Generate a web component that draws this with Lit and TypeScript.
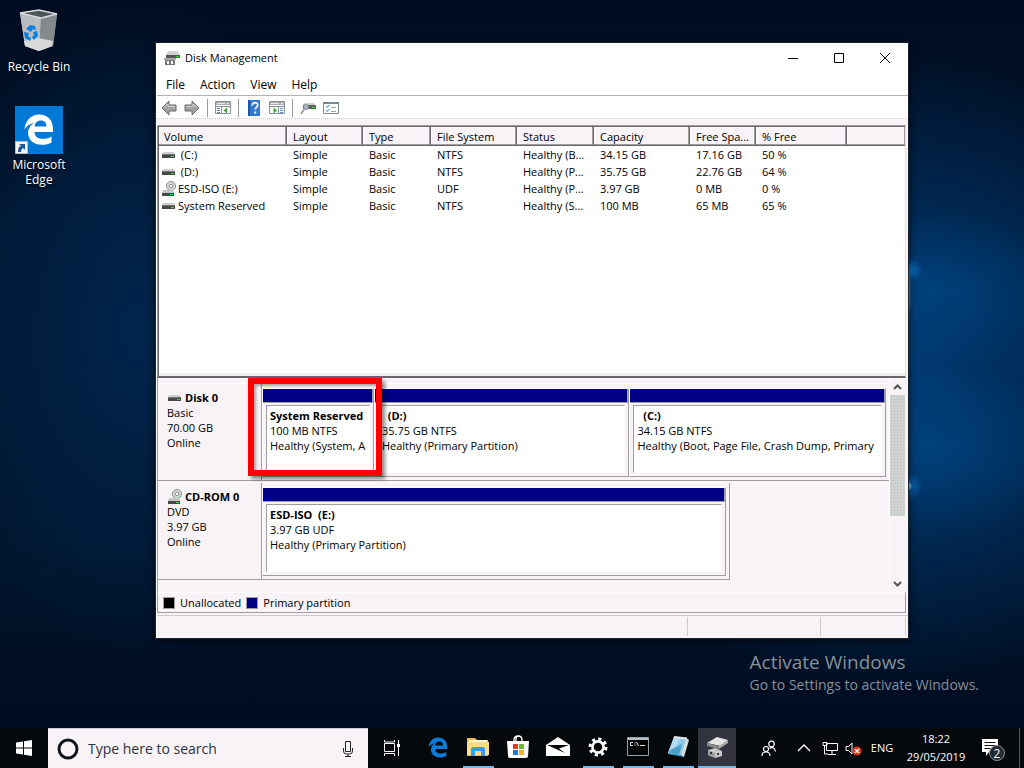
import { LitElement, html, css, svg } from "lit";
import { customElement } from "lit/decorators.js";

interface Volume {
  name: string;
  optical?: boolean;
  cells: string[];
}
interface Partition {
  title: string;
  size: string;
  status: string;
  share: number;
  marked?: boolean;
}
interface Disk {
  name: string;
  kind: string;
  size: string;
  state: string;
  optical?: boolean;
  width: number;
  partitions: Partition[];
}

const COLUMNS = ["Volume", "Layout", "Type", "File System", "Status", "Capacity", "Free Spa...", "% Free", ""];
const WIDTHS = [128, 76, 68, 86, 77, 96, 66, 91];

const VOLUMES: Volume[] = [
  { name: "\u00a0(C:)", cells: ["Simple", "Basic", "NTFS", "Healthy (B...", "34.15 GB", "17.16 GB", "50 %", ""] },
  { name: "\u00a0(D:)", cells: ["Simple", "Basic", "NTFS", "Healthy (P...", "35.75 GB", "22.76 GB", "64 %", ""] },
  { name: "ESD-ISO (E:)", optical: true, cells: ["Simple", "Basic", "UDF", "Healthy (P...", "3.97 GB", "0 MB", "0 %", ""] },
  { name: "System Reserved", cells: ["Simple", "Basic", "NTFS", "Healthy (S...", "100 MB", "65 MB", "65 %", ""] },
];

const DISKS: Disk[] = [
  {
    name: "Disk 0", kind: "Basic", size: "70.00 GB", state: "Online", width: 100,
    partitions: [
      { title: "System Reserved", size: "100 MB NTFS", status: "Healthy (System, A", share: 111, marked: true },
      { title: "\u00a0\u00a0(D:)", size: "35.75 GB NTFS", status: "Healthy (Primary Partition)", share: 256 },
      { title: "\u00a0\u00a0(C:)", size: "34.15 GB NTFS", status: "Healthy (Boot, Page File, Crash Dump, Primary", share: 257 },
    ],
  },
  {
    name: "CD-ROM 0", kind: "DVD", size: "3.97 GB", state: "Online", optical: true, width: 74.7,
    partitions: [{ title: "ESD-ISO\u00a0\u00a0(E:)", size: "3.97 GB UDF", status: "Healthy (Primary Partition)", share: 1 }],
  },
];

const driveIcon = (optical = false) => html`<svg class="drive" width="16" height="16" viewBox="0 0 16 16">
  ${optical ? svg`<circle cx="10" cy="5" r="4.6" fill="#d4d4d4" stroke="#8c8c8c" stroke-width=".9"/><circle cx="10" cy="5" r="1.7" fill="#fff" stroke="#909090"/>` : ""}
  ${optical
    ? svg`<path d="M2 9h10l1 3H1z" fill="#c4c4c4"/><path d="M1 12h12v3H1z" fill="#484848"/><path d="M9 13h3v1H9z" fill="#2fe02f"/>`
    : svg`<path d="M2 5h11l1 2H1z" fill="#cfcfcf"/><path d="M1 7h13v4H1z" fill="#484848"/><path d="M1 7h13v1H1z" fill="#777"/><path d="M10 9h3v1h-3z" fill="#2fe02f"/>`}
</svg>`;

const edgePath =
  "M1 17C2 8 8 1 17 1c9 0 15 6 15 15v4H12c0 5 4 7.500 9 7.500 4 0 7-1 9.500-2.500v6.500C28 33 24 34 20 34 11 34 5 29 5 21c0-5 3-9 7-11-5 1-9 4-11 7zm11-3h13c0-4-2-6.500-6-6.500S12.600 10 12 14z";

const backArrow = svg`<path d="M1 8 8 1v4h7v6H8v4z" fill="#a3a3a3" stroke="#6c6c6c"/><path d="M3 7.500 7 4v2.500h7" fill="none" stroke="#cfcfcf"/>`;

const panel = svg`<path d="M.5 1.500h15v12H.5z" fill="#fff" stroke="#8a8f94"/><path d="M1 2h14v3H1z" fill="#a9aeb3"/><path d="M2 3.500h8M12 3.500h2" stroke="#e8e8e8"/><path d="M1 6.500h14" stroke="#8a8f94"/>`;

const tools: Record<string, unknown> = {
  Back: backArrow,
  Forward: svg`<g transform="translate(16 0) scale(-1 1)">${backArrow}</g>`,
  "Show console tree": svg`${panel}<path d="M6.500 6v8" stroke="#8a8f94"/><path d="M2 8.500h3M2 10.500h3M2 12.500h3" stroke="#5b8fc7"/><path d="M12 7.500v6L8.500 10.500z" fill="#3fa535"/>`,
  Help: svg`<path d="M2 0h12v16H2z" fill="#1d55a5"/><path d="M4 0h10v16H4z" fill="#2f79cf"/><path d="M6.200 5.500c0-4 6-3.500 5.500-.2-.3 1.700-2.400 2-2.400 4.200" fill="none" stroke="#fff" stroke-width="1.800"/><path d="M8.200 11.500h2v2h-2z" fill="#fff"/>`,
  "Show action pane": svg`${panel}<path d="M9.500 6v8" stroke="#8a8f94"/><path d="M11 8.500h3M11 10.500h3M11 12.500h3" stroke="#5b8fc7"/><path d="M4.500 7.500v6L8 10.500z" fill="#3fa535"/>`,
  Rescan: svg`<path d="M4 3h10l1 2H3z" fill="#cfcfcf"/><path d="M3 5h13v4H3z" fill="#606060"/><path d="M12 7h3v1h-3z" fill="#2fe02f"/><circle cx="6" cy="7" r="2.500" fill="#a8bac6" stroke="#808890"/><path d="M4 9.500 1 14" stroke="#a58a78" stroke-width="1.500"/>`,
  Properties: svg`<path d="M.5 2.500h15v11H.5z" fill="#fff" stroke="#7c8791"/><path d="M0 2h16v2H0z" fill="#7c8791"/><path d="m3 6 1.200 1.500L6.500 5M3 10l1.200 1.500L6.500 9" fill="none" stroke="#2b86dc"/><path d="M8 7.500h5M8 11.500h5" stroke="#9aa"/>`,
};

const flag = svg`<path d="M0 2.400 7 1.400V7.500H0zM8 1.250 16 0v7.500H8zM0 8.500h7v6.100l-7-1zM8 8.500h8V16l-8-1.200z" fill="#fff"/>`;

const apps = [
  { name: "Microsoft Edge", open: false, art: svg`<g transform="translate(2 2) scale(.6)"><path d="${edgePath}" fill="#0a7bdc"/></g>` },
  { name: "File Explorer", open: true, art: svg`<path d="M1 3h8l2 2h11v16H1z" fill="#eabb52"/><path d="M3 5h18v2H3z" fill="#fff3c8"/><path d="M1 7h22v13H1z" fill="#fbdc8a"/><path d="M5 21v-7q0-2 2-2h10q2 0 2 2v7h-4v-5H9v5z" fill="#3c9be8"/>` },
  { name: "Store", open: false, art: svg`<path d="M8 7V5q0-4 4-4t4 4v2M10 7V4q0-3 3-3" fill="none" stroke="#fff" stroke-width="1.300"/><path d="M1 6h22l-1 15q0 2-2 2H4q-2 0-2-2z" fill="#fff"/><path d="M7 9h5v5H7z" fill="#dd4022"/><path d="M13 9h5v5h-5z" fill="#6db52a"/><path d="M7 15h5v5H7z" fill="#1a7fd4"/><path d="M13 15h5v5h-5z" fill="#f0b020"/>` },
  { name: "Mail", open: false, art: svg`<path d="M0 10 12 2l12 8v11H0z" fill="#fff"/><path d="M1 10h22L13 13.500l6 4.500z" fill="#05090c"/>` },
  { name: "Settings", open: true, art: svg`<circle cx="12" cy="12" r="8" fill="none" stroke="#fff" stroke-width="3" stroke-dasharray="3.140 3.140"/><circle cx="12" cy="12" r="5.600" fill="none" stroke="#fff" stroke-width="2.600"/>` },
  { name: "Command Prompt", open: true, art: svg`<path d="M1.500 2.500h21v18h-21z" fill="#050505" stroke="#9aa3a8"/><path d="M2 3h20v2H2z" fill="#b8c0c4"/><path d="M7 7.500H4.500v3H7M9 7.500v1m0 1v1M10.500 7l2 4M14 10.500h5" fill="none" stroke="#ddd"/>` },
  { name: "Notepad", open: true, art: svg`<path d="M8 2 22 4 17 22 2 19z" fill="#3987ba"/><path d="M8 2 20 3.500 15 20 2 18z" fill="#8ecbea"/><path d="M8 2 14 3 7 19 2 18z" fill="#b4dcf0"/><path d="m4 15 12-6-3 11-10-2z" fill="#4d9fce"/><path d="m20 3 3 2-5 17-3-2z" fill="#d8dde0"/><path d="m8 2 13 1.500" stroke="#dfe7ea" stroke-width="2"/>` },
  { name: "Disk Management", open: true, active: true, art: svg`<path d="m2 8 10-6 11 3-7 6z" fill="#e4e4e4"/><path d="m2 8 12 3v3L2 11z" fill="#888"/><path d="m14 11 9-6v3l-9 6z" fill="#a9a9a9"/><path d="m3 15 7-2 7 3v5l-7 2-7-3z" fill="#c8c8c8"/><path d="m3 15 7 3v5l-7-3z" fill="#9b9b9b"/><path d="M5 17h2v2H5zM12 18h2v2h-2z" fill="#333"/>` },
];

@customElement("disk-window")
class DiskWindow extends LitElement {
  static styles = css`
    :host {
      display: flex;
      flex-direction: column;
      box-sizing: border-box;
      background: #f7f3f7;
      border-left: 1px solid #fff;
      box-shadow: 0 0 0 1px #1b2530, 0 2px 8px 1px #000a;
      color: #000;
      font: 11px/15px "Open Sans", sans-serif;
    }
    button { border: 0; padding: 0; background: none; font: inherit; color: inherit; display: grid; place-items: center; }
    .title { height: 30px; background: #fff; display: flex; align-items: center; padding-left: 6px; }
    .title h1 { font: 11px/16px "Open Sans", sans-serif; margin: 0 auto 0 4px; }
    .title button { width: 46px; height: 30px; }
    .menu { height: 22px; background: #fff; border-bottom: 1px solid #b4b2b4; display: flex; padding-left: 9px; gap: 15px; font-size: 12px; }
    .tools { height: 20px; padding-top: 2px; background: #fff; border-bottom: 1px dotted #cfcccf; display: flex; align-items: center; padding-left: 4px; gap: 7px; }
    .tools i { width: 1px; height: 18px; background: #999; }
    .list { flex: 1; min-height: 90px; margin: 6px 2px 0 0; border: 1px solid #a09da0; border-bottom: 2px solid #69666b; border-right-color: #e3dfe3; background: #fff; box-sizing: border-box; box-shadow: inset 1px 1px #69666b, inset 0 -3px #f1edf1; overflow: hidden; padding: 1px 0 0 1px; }
    table { width: 100%; table-layout: fixed; border-collapse: separate; border-spacing: 0; }
    th { background: #f7f3f7; height: 19px; box-sizing: border-box; border-right: 1px solid #69666b; border-bottom: 1px solid #69666b; box-shadow: inset -1px -1px #a09da0, inset 1px 1px #fff; font-weight: normal; text-align: left; padding: 0 0 0 5px; white-space: nowrap; }
    th:nth-child(n + 2), td:nth-child(n + 2) { padding-left: 6px; }
    th:last-child { border-right: 0; }
    td { height: 17px; padding: 0 0 0 2px; line-height: 17px; white-space: nowrap; overflow: hidden; }
    .vol { display: flex; align-items: center; gap: 1px; height: 17px; }
    .drive { flex: none; }
    .lower { display: flex; height: 214px; border-left: 1px solid #a09da0; margin-right: 3px; box-sizing: border-box; }
    .disks { flex: 1; min-width: 0; padding-top: 5px; border-right: 1px solid #fff; }
    .disk { height: 98px; margin-bottom: 1px; display: grid; grid-template-columns: 104px minmax(0, 1fr); border-top: 1px solid #fff; box-sizing: border-box; }
    .label { border-right: 1px solid #a09da0; border-bottom: 1px solid #a09da0; padding: 6px 0 0 9px; }
    .label h2 { font: bold 11px/15px "Open Sans", sans-serif; margin: 0; height: 15px; display: flex; align-items: center; gap: 2px; }
    .label p, .part p { margin: 0; }
    .graph { box-sizing: border-box; display: flex; border-bottom: 1px solid #a09da0; padding: 4px 3px 3px 0; }
    .graph.short { border-right: 1px solid #a09da0; }
    .part { position: relative; min-width: 0; box-sizing: border-box; display: flex; flex-direction: column; border: 1px solid #a09da0; border-top-color: #fff; border-left-color: #fff; }
    .bar { height: 13px; background: #000084; border-right: 1px solid #a09da0; border-bottom: 1px solid #a09da0; }
    .box { flex: 1; margin: 2px 3px 3px; border: 1px solid #a09da0; border-right-color: #fff; border-bottom-color: #fff; background: #fff; padding: 2px 2px 0 3px; }
    .text { overflow: hidden; white-space: nowrap; }
    .text b { display: block; }
    .mark { position: absolute; z-index: 2; inset: -11px -9px 0 -15px; border: 6px solid #f00; box-shadow: 3px 3px 4px #0007, inset 2px 2px 3px #0005; }
    .scroll { width: 15px; display: flex; flex-direction: column; }
    .scroll button { height: 17px; }
    .track { flex: 1; padding-bottom: 59px; display: flex; }
    .thumb { flex: 1; background: radial-gradient(#bdc0bf 28%, #d0d1d1 32%) 0 0 / 3px 3px; }
    .legend { height: 21px; box-sizing: border-box; margin-right: 2px; border: 1px solid #a09da0; border-top-color: #fff; display: flex; align-items: center; padding-left: 5px; gap: 5px; }
    .legend i { width: 10px; height: 10px; border: 1px solid #a09da0; background: #000; }
    .legend i.primary { background: #000084; }
    .status { margin-top: 2px; height: 23px; box-sizing: border-box; border-top: 1px solid #cccacc; display: grid; grid-template-columns: 1fr 132px 84px; gap: 1px; padding: 1px 2px 2px 0; }
    .status span { border-right: 1px solid #cccacc; }
  `;

  partition(p: Partition) {
    return html`<div class="part" style="flex:${p.share} 1 0">
      <div class="bar"></div>
      <div class="box"><div class="text"><b>${p.title}</b><p>${p.size}</p><p>${p.status}</p></div></div>
      ${p.marked ? html`<div class="mark"></div>` : ""}
    </div>`;
  }

  render() {
    const tool = (name: string) => html`<button aria-label=${name}><svg width="16" height="16" viewBox="0 0 16 16">${tools[name]}</svg></button>`;
    return html`
      <div class="title">
        <svg width="18" height="16" viewBox="0 0 18 16"><path d="M5 1h10l2 4H3z" fill="#d2d2d2"/><path d="M3 5h14v3H3z" fill="#555"/><path d="M13 6h3v1h-3z" fill="#2fe02f"/><path d="M2 8h10v7H2z" fill="#777"/><path d="M1 8h12v2H1z" fill="#aaa"/><path d="M4 11h2v3H4zM8 11h2v3H8z" fill="#fff"/></svg>
        <h1>Disk Management</h1>
        <button aria-label="Minimize"><svg width="10" height="10"><path d="M0 5.500h10" stroke="#000"/></svg></button>
        <button aria-label="Maximize"><svg width="10" height="10"><path d="M.5.5h9v9h-9z" fill="none" stroke="#000"/></svg></button>
        <button aria-label="Close"><svg width="10" height="10"><path d="m0 0 10 10M10 0 0 10" stroke="#000"/></svg></button>
      </div>
      <div class="menu">${["File", "Action", "View", "Help"].map((m) => html`<button>${m}</button>`)}</div>
      <div class="tools">
        ${tool("Back")}${tool("Forward")}<i></i>${tool("Show console tree")}<i></i>${tool("Help")}${tool("Show action pane")}<i></i>${tool("Rescan")}${tool("Properties")}
      </div>
      <div class="list">
        <table>
          <colgroup>${WIDTHS.map((w) => html`<col style="width:${w}px">`)}<col></colgroup>
          <thead><tr>${COLUMNS.map((c) => html`<th>${c}</th>`)}</tr></thead>
          <tbody>
            ${VOLUMES.map((v) => html`<tr><td><div class="vol">${driveIcon(v.optical)}${v.name}</div></td>${v.cells.map((c) => html`<td>${c}</td>`)}</tr>`)}
          </tbody>
        </table>
      </div>
      <div class="lower">
        <div class="disks">
          ${DISKS.map((d) => html`<div class="disk">
            <div class="label"><h2>${driveIcon(d.optical)}${d.name}</h2><p>${d.kind}</p><p>${d.size}</p><p>${d.state}</p></div>
            <div class="graph ${d.width < 100 ? "short" : ""}" style="width:${d.width}%">${d.partitions.map((p) => this.partition(p))}</div>
          </div>`)}
        </div>
        <div class="scroll">
          <button aria-label="Scroll up"><svg width="9" height="6"><path d="m1 5 3.500-3.500L8 5" fill="none" stroke="#555" stroke-width="2"/></svg></button>
          <div class="track"><div class="thumb"></div></div>
          <button aria-label="Scroll down"><svg width="9" height="6"><path d="m1 1 3.500 3.500L8 1" fill="none" stroke="#555" stroke-width="2"/></svg></button>
        </div>
      </div>
      <div class="legend"><i></i><span>Unallocated</span><i class="primary"></i><span>Primary partition</span></div>
      <div class="status"><span></span><span></span><span></span></div>
    `;
  }
}

@customElement("task-bar")
class TaskBar extends LitElement {
  static styles = css`
    :host { display: flex; height: 40px; background: #05090c; color: #fff; font: 12px/18px "Open Sans", sans-serif; }
    button { border: 0; padding: 0; background: none; color: inherit; font: inherit; display: grid; place-items: center; }
    .start { width: 48px; }
    .search { display: flex; flex: 0 1 320px; box-sizing: border-box; background: #f7f3f7; border-top: 1px solid #c6c9cb; align-items: center; padding: 0 14px 0 9px; gap: 9px; }
    input { flex: 1; min-width: 0; border: 0; padding: 0; outline: 0; background: none; font: 14px/20px "Open Sans", sans-serif; color: #222; }
    input::placeholder { color: #2c3440; opacity: 1; }
    .view { width: 48px; margin-right: 2px; }
    .app { width: 40px; border-bottom: 2px solid transparent; background-clip: padding-box; }
    .app.open { background: linear-gradient(#76b9ed, #76b9ed) 5px 100% / 31px 2px no-repeat border-box; }
    .app.active { width: 38px; background: #32353f; border-bottom-color: #76b9ed; }
    .tray { margin-left: auto; display: flex; align-items: center; }
    .tray > button { height: 40px; }
    .people { width: 40px; }
    .up { width: 30px; }
    .net { width: 22px; }
    .sound { width: 24px; }
    .lang { width: 34px; font-size: 11px; }
    .clock { width: 74px; text-align: center; font-size: 11px; }
    .notes { width: 46px; }
    .notes svg { margin-right: 6px; }
    .show { width: 5px; border-left: 1px solid #5a5d60; }
  `;

  render() {
    return html`
      <button class="start" aria-label="Start"><svg width="16" height="16">${flag}</svg></button>
      <label class="search">
        <svg width="22" height="22"><circle cx="11" cy="11" r="9" fill="none" stroke="#11181c" stroke-width="3"/></svg>
        <input aria-label="Type here to search" placeholder="Type here to search">
        <svg width="12" height="18" viewBox="0 0 12 18"><path d="M3.500 1.500h5v10h-5zM1.500 8v3q0 3 3 3h3q3 0 3-3V8M6 14v2.500M3 16.500h6" fill="none" stroke="#222"/></svg>
      </label>
      <button class="view" aria-label="Task View"><svg width="18" height="18" viewBox="0 0 18 18"><path d="M1.500 4.500h10v8h-10zM1.500 1v2h10V1M1.500 17v-2.500h10V17M15.500 1v16" fill="none" stroke="#fff"/><path d="M14 5h3v3h-3z" fill="#fff"/></svg></button>
      ${apps.map((a) => html`<button class="app ${a.open ? "open" : ""} ${a.active ? "active" : ""}" aria-label=${a.name}><svg width="24" height="24" viewBox="0 0 24 24">${a.art}</svg></button>`)}
      <div class="tray">
        <button class="people" aria-label="People"><svg width="16" height="17" viewBox="0 0 16 17"><g fill="none" stroke="#fff" stroke-width="1.200"><circle cx="10.500" cy="4" r="2.800"/><path d="M8.500 8.500q5-2.500 6 3"/><circle cx="5" cy="9" r="2.500"/><path d="M1 16q0-4 4-4t4 4"/></g></svg></button>
        <button class="up" aria-label="Show hidden icons"><svg width="14" height="8"><path d="m1 7 6-6 6 6" fill="none" stroke="#fff" stroke-width="1.300"/></svg></button>
        <button class="net" aria-label="Network"><svg width="17" height="15"><path d="M4.500 2.500h11v7h-11zM10 10v3M6 13.500h8M1 1.500h4v3H1zM2.500 5v8H6" fill="none" stroke="#fff"/></svg></button>
        <button class="sound" aria-label="Volume"><svg width="17" height="15"><path d="M1 5.500h2.500L7 2v11L3.500 9.500H1z" fill="none" stroke="#fff"/><circle cx="12" cy="10" r="4.500" fill="#dd3418"/><path d="m10 8 4 4m0-4-4 4" stroke="#fff" stroke-width="1.400"/></svg></button>
        <button class="lang">ENG</button>
        <button class="clock"><span>18:22<br>29/05/2019</span></button>
        <button class="notes" aria-label="Notifications, 2 new"><svg width="24" height="26" viewBox="0 0 24 26"><path d="M1 4h16v13H8l-3 4v-4H1z" fill="#fff"/><path d="M3.500 7.500h11M3.500 10.500h11M3.500 13.500h6" stroke="#111"/><circle cx="16" cy="18" r="7.500" fill="#252a32" stroke="#8b9095"/><text x="16" y="22.500" text-anchor="middle" font-size="12" fill="#fff">2</text></svg></button>
        <button class="show" aria-label="Show desktop"></button>
      </div>
    `;
  }
}

@customElement("app-root")
class AppRoot extends LitElement {
  static styles = css`
    :host { display: grid; grid-template-rows: minmax(0, 1fr) 40px; height: 100vh; overflow: hidden; font: 12px/15px "Open Sans", sans-serif; color: #fff; }
    .desktop {
      position: relative;
      background:
        radial-gradient(ellipse 3px 34px at 908px 292px, #8fd0ff, transparent),
        radial-gradient(ellipse 3px 5px at 909px 486px, #bfe4ff, transparent),
        radial-gradient(ellipse 14px 12px at 909px 270px, #0c74c8, transparent),
        radial-gradient(ellipse 14px 14px at 909px 486px, #0b68b8, transparent),
        radial-gradient(ellipse 150px 80px at 930px 290px, #004f9480, transparent),
        radial-gradient(ellipse 150px 90px at 930px 450px, #004f9480, transparent),
        radial-gradient(ellipse 330px 320px at 890px 370px, #003c76, transparent),
        radial-gradient(ellipse 210px 330px at 140px 330px, #00254c, transparent),
        linear-gradient(#000c20, #00152f 30%, #00162f 75%, #000b1f);
    }
    .icons { padding: 8px 3px; width: 72px; display: flex; flex-direction: column; gap: 32px; }
    .icon { color: inherit; text-decoration: none; text-align: center; text-shadow: 1px 1px 2px #000; display: flex; flex-direction: column; align-items: center; gap: 3px; }
    .window { position: absolute; inset: 43px 116px 90px 156px; }
    .activate { position: absolute; right: 45px; bottom: 33px; color: #878f98; font-size: 14px; line-height: 20px; }
    .activate h2 { margin: 0; font-size: 19px; line-height: 25px; font-weight: normal; }
    .activate p { margin: 0; }
  `;

  render() {
    return html`
      <div class="desktop">
        <nav class="icons">
          <a class="icon" href="#bin">
            <svg width="48" height="48" viewBox="0 0 48 48">
              <path d="M5 5 24 2l18 4-4 32-14 5-14-5z" fill="#a9adb0"/>
              <path d="M5 5 26 10l-2 33-14-5z" fill="#b9bdc0"/><path d="M26 10 42 6l-4 32-14 5z" fill="#85898c"/>
              <path d="M5 5 24 2l18 4-16 4z" fill="#4d5459"/><path d="m9 33 14-3 15 3-1 5-13 5-14-5z" fill="#d8dada"/>
              <path d="M5 5 24 2l18 4-16 4z" fill="none" stroke="#d9dcde" stroke-width="1.400"/>
              <path d="m11 21 4-4 5 1 1 4-3-1-2 3zM9 24l5 1-1 3 3 2-1 3-5-3zM22 23l1 5-4 4-2-3 2-2-1-3z" fill="#0b7fe0"/>
            </svg>
            <span>Recycle Bin</span>
          </a>
          <a class="icon" href="#edge">
            <svg width="48" height="48" viewBox="0 0 48 48">
              <path d="M0 0h48v48H0z" fill="#0078d7"/>
              <g transform="translate(8.500 7.500) scale(.92)"><path d="${edgePath}" fill="#fff"/></g>
              <path d="M.5 35.500h12v12H.5z" fill="#f4f4f4" stroke="#bbb"/><path d="M3 46q0-6 3-6l-2-2h6v6l-2-2q-2 1-2 4z" fill="#1f57a5"/>
            </svg>
            <span>Microsoft Edge</span>
          </a>
        </nav>
        <disk-window class="window"></disk-window>
        <div class="activate"><h2>Activate Windows</h2><p>Go to Settings to activate Windows.</p></div>
      </div>
      <task-bar></task-bar>
    `;
  }
}
